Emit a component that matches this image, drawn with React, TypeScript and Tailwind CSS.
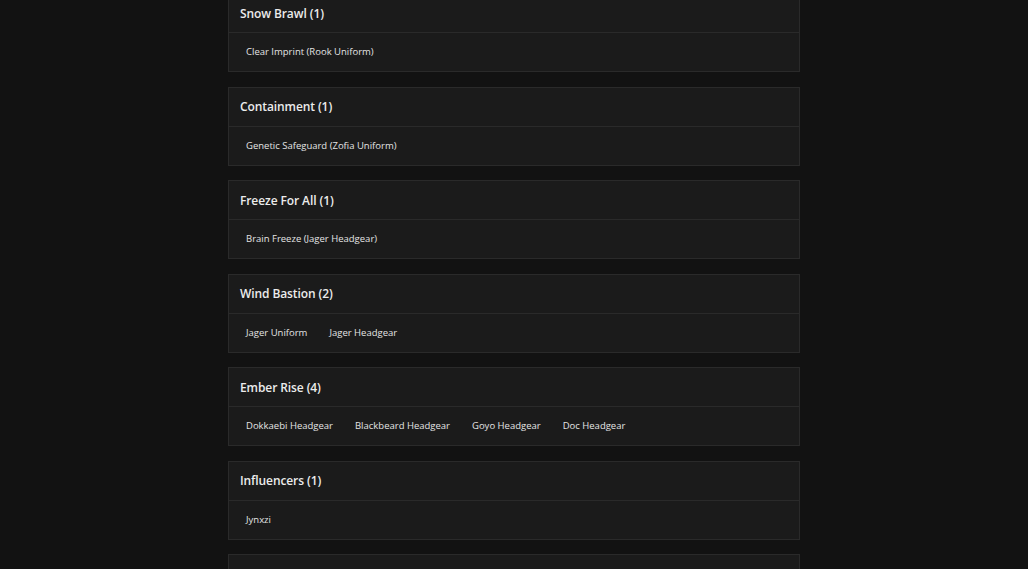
const groups = [
  { name: 'Snow Brawl', items: ['Clear Imprint (Rook Uniform)'] },
  { name: 'Containment', items: ['Genetic Safeguard (Zofia Uniform)'] },
  { name: 'Freeze For All', items: ['Brain Freeze (Jager Headgear)'] },
  { name: 'Wind Bastion', items: ['Jager Uniform', 'Jager Headgear'] },
  { name: 'Ember Rise', items: ['Dokkaebi Headgear', 'Blackbeard Headgear', 'Goyo Headgear', 'Doc Headgear'] },
  { name: 'Influencers', items: ['Jynxzi'] },
]

const App = () => {
  return (
    <div className="h-[569px] overflow-hidden bg-[#121212] font-['Open_Sans',sans-serif] text-[#ececec]">
      <div className="w-[572px] mx-auto -mt-[7px] flex flex-col gap-[14.5px]">
        {groups.map((g) => (
          <div key={g.name} className="bg-[#1b1b1b] border border-[#2a2a2a]">
            <div className="h-[39px] flex items-center px-[11px] pt-px border-b border-[#2a2a2a]">
              <h2 className="text-[12px] font-semibold tracking-[-0.1px]">{g.name} ({g.items.length})</h2>
            </div>
            <div className="h-[38px] flex items-center px-[11px] gap-[10px] pt-px">
              {g.items.map((item) => (
                <span key={item} className="px-[6px] text-[9.5px] text-[#e4e4e4]">{item}</span>
              ))}
            </div>
          </div>
        ))}
        {/* next card, only its top edge is in view */}
        <div className="h-[80px] bg-[#1b1b1b] border border-[#2a2a2a]" />
      </div>
    </div>
  )
}

export default App
